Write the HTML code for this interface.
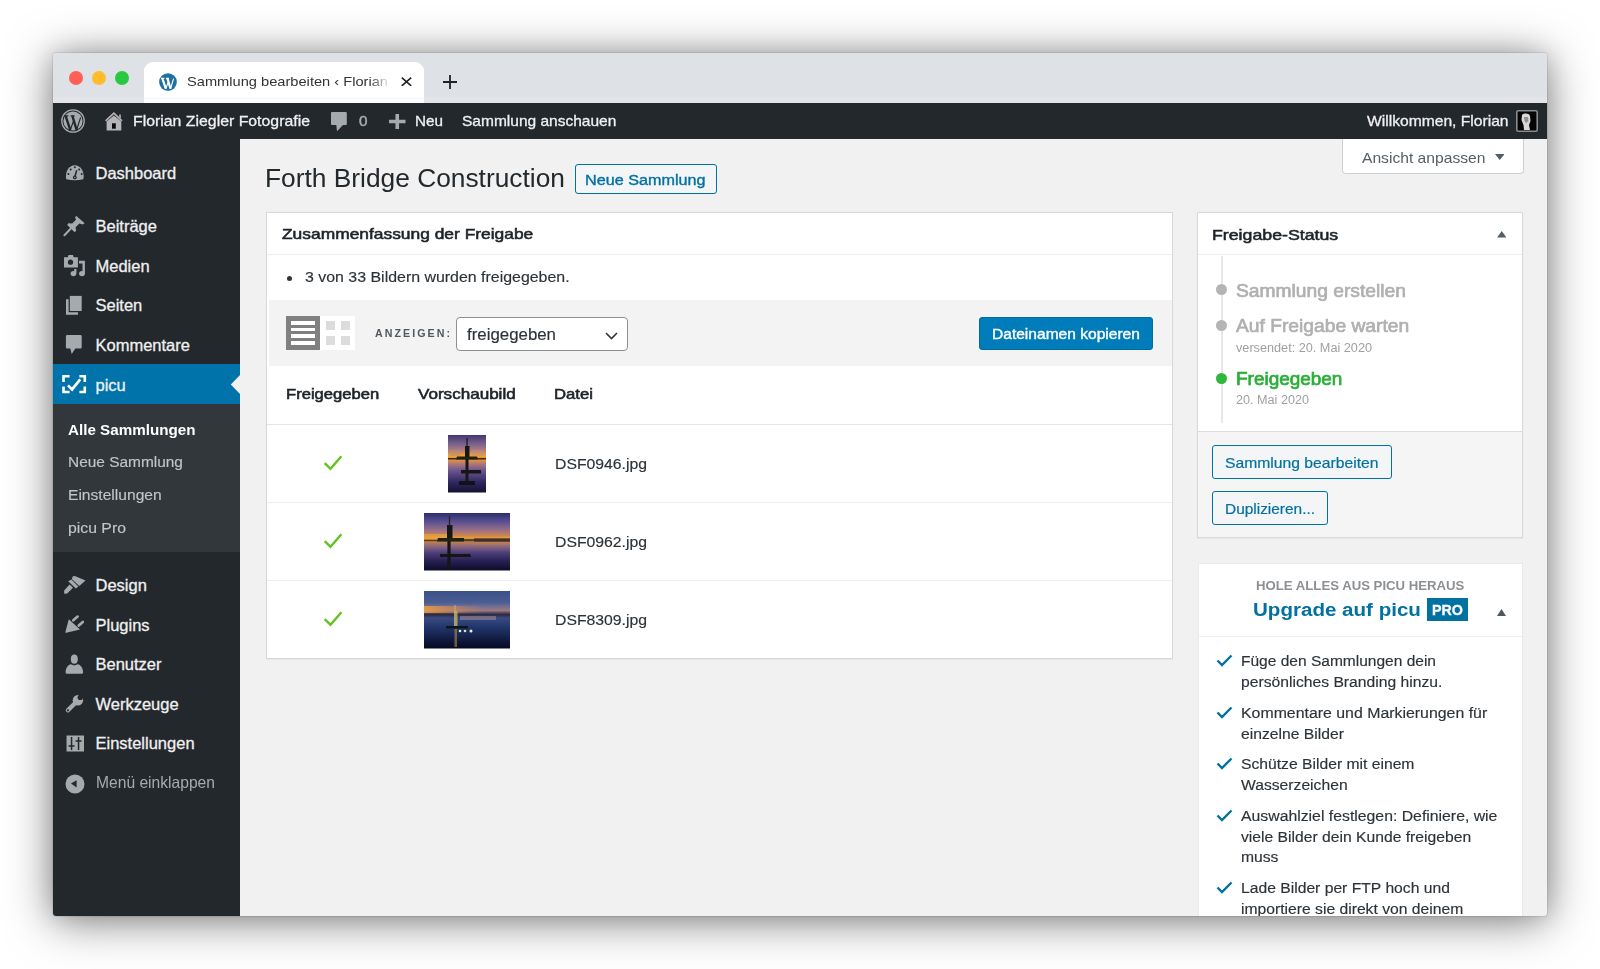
<!DOCTYPE html>
<html><head><meta charset="utf-8">
<style>
*{box-sizing:border-box;margin:0;padding:0}
html,body{width:1600px;height:969px;overflow:hidden;background:#fff;font-family:"Liberation Sans",sans-serif}
.a{position:absolute}
.t{position:absolute;white-space:nowrap}
#clip{position:absolute;left:0;top:0;width:1600px;height:916px;overflow:hidden}
</style></head><body>
<div class="a" style="left:53px;top:53px;width:1494px;height:863px;border-radius:3px;background:#f1f1f1;box-shadow:0 0 0 1px rgba(0,0,0,0.08),0 5px 46px rgba(0,0,0,0.5),0 0 22px rgba(0,0,0,0.12)"></div><div id="clip"><div class="a" style="left:53px;top:53px;width:1494px;height:50px;background:#dee1e6;border-radius:3px 3px 0 0"></div>
<div class="a" style="left:68.5px;top:70.5px;width:14px;height:14px;border-radius:50%;background:#fe5f57"></div>
<div class="a" style="left:91.5px;top:70.5px;width:14px;height:14px;border-radius:50%;background:#febc2e"></div>
<div class="a" style="left:114.5px;top:70.5px;width:14px;height:14px;border-radius:50%;background:#28c840"></div>
<div class="a" style="left:53px;top:96.5px;width:1494px;height:6px;background:#e2e4e8"></div>
<div class="a" style="left:144px;top:62px;width:280px;height:41px;background:#fff;border-radius:9px 9px 0 0"></div>
<div class="a" style="left:144px;top:97.5px;width:280px;height:1px;background:#f1f2f4"></div>
<svg class="a" style="left:159px;top:73px" width="18" height="18" viewBox="0 0 24 24"><circle cx="12" cy="12" r="11.8" fill="#1f6fa3"/><path d="M4.4 7.2L9.1 21M11.2 7.2L15.4 21" stroke="#fff" stroke-width="3"/><path d="M9.1 21L12.1 12.5M15.4 21L19.4 7.5M2.6 7.2H7.2M9.4 7.2H13.4" stroke="#fff" stroke-width="1.5"/></svg>
<div class="t" style="left:187.00px;top:74.57px;font-size:13.5px;line-height:13.5px;color:#333;transform:scaleX(1.0844);transform-origin:0 0;">Sammlung bearbeiten ‹ Florian</div>
<div class="a" style="left:370px;top:66px;width:24px;height:32px;background:linear-gradient(90deg,rgba(255,255,255,0),#fff 85%)"></div>
<svg class="a" style="left:400.5px;top:76.8px" width="11" height="9.5" viewBox="0 0 11 9.5"><path d="M0.8 0.6L10.2 8.9M10.2 0.6L0.8 8.9" stroke="#222" stroke-width="1.6"/></svg>
<svg class="a" style="left:443px;top:75px" width="14" height="14" viewBox="0 0 14 14"><path d="M7 0V14M0 7H14" stroke="#222" stroke-width="1.8"/></svg>
<div class="a" style="left:53px;top:102.5px;width:1494px;height:36px;background:#23282d"></div>
<svg class="a" style="left:61px;top:109px" width="24" height="24" viewBox="0 0 24 24"><circle cx="12" cy="12" r="11.2" fill="none" stroke="#a7aaad" stroke-width="1.3"/><circle cx="12" cy="12" r="9.6" fill="#a7aaad"/><path d="M4.6 6.8L9.3 21M11.4 6.8L15.6 21" stroke="#23282d" stroke-width="2.4"/><path d="M9.3 21L12.3 12.5M15.6 21L19.6 8.5M2.8 6.9H7.4M9.6 6.9H13.6" stroke="#23282d" stroke-width="1.1"/></svg>
<svg class="a" style="left:100px;top:106px" width="30" height="30" viewBox="0 0 30 30"><path d="M5.6 14.9L13.9 7.1L22 14.9" fill="none" stroke="#b4b6b9" stroke-width="1.6"/><path d="M19.2 8.5H20.8V12.5L19.2 11Z" fill="#b4b6b9"/><path d="M6.6 15.5L13.9 9.6L21.3 15.5V24.5H6.6Z" fill="#b4b6b9"/><rect x="12" y="17.3" width="3.8" height="5.4" fill="#0a0a0a"/></svg>
<div class="t" style="left:133.00px;top:113.97px;font-size:14.8px;line-height:14.8px;color:#f0f0f1;transform:scaleX(1.0705);transform-origin:0 0;-webkit-text-stroke:0.3px #f0f0f1;">Florian Ziegler Fotografie</div>
<svg class="a" style="left:330px;top:111px" width="18" height="21" viewBox="0 0 18 21"><path d="M2 1H15.8A1 1 0 0 1 16.8 2V13.1A1 1 0 0 1 15.8 14.1H13L7 20.2L6.3 14.1H2A1 1 0 0 1 1 13.1V2A1 1 0 0 1 2 1Z" fill="#a7aaad"/></svg>
<div class="t" style="left:358.50px;top:113.97px;font-size:14.8px;line-height:14.8px;color:#a7aaad;transform:scaleX(1.0326);transform-origin:0 0;-webkit-text-stroke:0.5px #a7aaad;">0</div>
<svg class="a" style="left:389px;top:114px" width="16.5" height="15" viewBox="0 0 16.5 15"><path d="M8.25 0V15M0 7.5H16.5" stroke="#a7aaad" stroke-width="3.6"/></svg>
<div class="t" style="left:415.20px;top:113.97px;font-size:14.8px;line-height:14.8px;color:#f0f0f1;transform:scaleX(1.0313);transform-origin:0 0;-webkit-text-stroke:0.3px #f0f0f1;">Neu</div>
<div class="t" style="left:462.00px;top:113.97px;font-size:14.8px;line-height:14.8px;color:#f0f0f1;transform:scaleX(1.0484);transform-origin:0 0;-webkit-text-stroke:0.3px #f0f0f1;">Sammlung anschauen</div>
<div class="t" style="left:1367.20px;top:113.97px;font-size:14.8px;line-height:14.8px;color:#f0f0f1;transform:scaleX(1.0563);transform-origin:0 0;-webkit-text-stroke:0.3px #f0f0f1;">Willkommen, Florian</div>
<svg class="a" style="left:1516px;top:110px" width="22" height="22" viewBox="0 0 22 22"><defs><filter id="avb"><feGaussianBlur stdDeviation="0.7"/></filter></defs><rect x="0.8" y="0.8" width="20.4" height="20.4" rx="1.5" fill="#050505" stroke="#8a8c90" stroke-width="1.6"/><g filter="url(#avb)"><path d="M6 5C8 3 13 3 14 6L14.5 11L13 15L14 20H8L7.5 15L5.5 10Z" fill="#d8d8d8"/><path d="M8 7H12L12.5 11L10 13L8.5 11Z" fill="#909090"/></g></svg>
<div class="a" style="left:53px;top:138px;width:186.8px;height:778px;background:#23282d;border-bottom-left-radius:3px"></div>
<div class="a" style="left:53px;top:404px;width:187px;height:148px;background:#32373c"></div>
<div class="a" style="left:53px;top:364px;width:187px;height:40px;background:#0073aa"></div>
<svg class="a" style="left:230px;top:375px" width="10" height="19" viewBox="0 0 10 19"><path d="M10 0V19L0.8 9.5Z" fill="#f1f1f1"/></svg>
<div class="t" style="left:95.50px;top:165.43px;font-size:16.5px;line-height:16.5px;color:#f0f0f1;-webkit-text-stroke:0.3px #f0f0f1;">Dashboard</div>
<div class="t" style="left:95.50px;top:217.93px;font-size:16.5px;line-height:16.5px;color:#f0f0f1;-webkit-text-stroke:0.3px #f0f0f1;">Beiträge</div>
<div class="t" style="left:95.50px;top:257.93px;font-size:16.5px;line-height:16.5px;color:#f0f0f1;-webkit-text-stroke:0.3px #f0f0f1;">Medien</div>
<div class="t" style="left:95.50px;top:297.28px;font-size:16.5px;line-height:16.5px;color:#f0f0f1;-webkit-text-stroke:0.3px #f0f0f1;">Seiten</div>
<div class="t" style="left:95.50px;top:336.63px;font-size:16.5px;line-height:16.5px;color:#f0f0f1;-webkit-text-stroke:0.3px #f0f0f1;">Kommentare</div>
<div class="t" style="left:95.50px;top:376.63px;font-size:16.5px;line-height:16.5px;color:#f0f0f1;-webkit-text-stroke:0.3px #f0f0f1;">picu</div>
<div class="t" style="left:95.50px;top:576.63px;font-size:16.5px;line-height:16.5px;color:#f0f0f1;-webkit-text-stroke:0.3px #f0f0f1;">Design</div>
<div class="t" style="left:95.50px;top:616.63px;font-size:16.5px;line-height:16.5px;color:#f0f0f1;-webkit-text-stroke:0.3px #f0f0f1;">Plugins</div>
<div class="t" style="left:95.50px;top:656.03px;font-size:16.5px;line-height:16.5px;color:#f0f0f1;-webkit-text-stroke:0.3px #f0f0f1;">Benutzer</div>
<div class="t" style="left:95.50px;top:695.63px;font-size:16.5px;line-height:16.5px;color:#f0f0f1;-webkit-text-stroke:0.3px #f0f0f1;">Werkzeuge</div>
<div class="t" style="left:95.50px;top:735.43px;font-size:16.5px;line-height:16.5px;color:#f0f0f1;-webkit-text-stroke:0.3px #f0f0f1;">Einstellungen</div>
<div class="t" style="left:95.50px;top:773.53px;font-size:16.5px;line-height:16.5px;color:#a7aaad;transform:scaleX(0.9469);transform-origin:0 0;">Menü einklappen</div>
<div class="t" style="left:67.50px;top:421.70px;font-size:15px;line-height:15px;color:#fff;font-weight:700;transform:scaleX(1.0130);transform-origin:0 0;">Alle Sammlungen</div>
<div class="t" style="left:67.50px;top:454.38px;font-size:15.2px;line-height:15.2px;color:#c3c4c7;transform:scaleX(1.0157);transform-origin:0 0;-webkit-text-stroke:0.15px #c3c4c7;">Neue Sammlung</div>
<div class="t" style="left:67.50px;top:487.13px;font-size:15.2px;line-height:15.2px;color:#c3c4c7;transform:scaleX(1.0272);transform-origin:0 0;-webkit-text-stroke:0.15px #c3c4c7;">Einstellungen</div>
<div class="t" style="left:67.50px;top:519.63px;font-size:15.2px;line-height:15.2px;color:#c3c4c7;transform:scaleX(1.0401);transform-origin:0 0;-webkit-text-stroke:0.15px #c3c4c7;">picu Pro</div>
<svg class="a" style="left:64.5px;top:164px" width="20" height="17" viewBox="0 0 20 17"><path d="M1.3 15.2C-0.2 8.5 3.5 1.2 9.8 1.2S19.8 8.5 18.3 15.2Q9.8 17.3 1.3 15.2Z" fill="#a7aaad"/><circle cx="3.4" cy="10.1" r="1" fill="#23282d"/><circle cx="5.7" cy="5.6" r="1" fill="#23282d"/><circle cx="9.8" cy="3.3" r="1" fill="#23282d"/><circle cx="14.2" cy="5.6" r="1" fill="#23282d"/><circle cx="16.7" cy="10.1" r="1" fill="#23282d"/><path d="M11.7 6.2L9.9 12.8" stroke="#23282d" stroke-width="1.5"/><circle cx="9.8" cy="13.4" r="1.9" fill="#23282d"/><circle cx="9.8" cy="13.4" r="0.7" fill="#a7aaad"/></svg>
<svg class="a" style="left:58px;top:210px" width="32" height="32" viewBox="0 0 32 32"><path d="M18.4 6L26.7 13.3L24.6 14.5L21.4 13.4L17.6 17.2L18.1 21.1L16.4 22.1L9.2 15L10.3 13.2L14.2 13.6L18 9.8L17.1 7.1Z" fill="#a7aaad"/><path d="M12.6 18.7L6.4 25.2" stroke="#a7aaad" stroke-width="2" stroke-linecap="round"/></svg>
<svg class="a" style="left:60px;top:252px" width="30" height="28" viewBox="0 0 30 28"><path d="M4 5.2H7.8L8.5 3H13L13.6 5.2H17.9V15.6H4Z" fill="#a7aaad"/><circle cx="10.5" cy="10.2" r="2.6" fill="#23282d"/><path d="M19 8.7H24.9V21.5H22.5V11.6H19Z" fill="#a7aaad"/><ellipse cx="22" cy="21.6" rx="2.9" ry="2.7" fill="#a7aaad"/><ellipse cx="13.4" cy="21.6" rx="2.8" ry="2.7" fill="#a7aaad"/><path d="M14.2 21.5V17H16.4V21.5Z" fill="#a7aaad"/></svg>
<svg class="a" style="left:60px;top:290px" width="30" height="30" viewBox="0 0 30 30"><path d="M9.8 5.9H21.7V21H9.8Z" fill="#a7aaad"/><path d="M6 9.3H8.6V22.2H18V24.8H6Z" fill="#a7aaad"/></svg>
<svg class="a" style="left:60px;top:330px" width="30" height="30" viewBox="0 0 30 30"><path d="M7.2 5H20.4A1.3 1.3 0 0 1 21.7 6.3V17.3A1.3 1.3 0 0 1 20.4 18.6H15.3L11.7 24L10.3 18.6H7.2A1.3 1.3 0 0 1 5.9 17.3V6.3A1.3 1.3 0 0 1 7.2 5Z" fill="#a7aaad"/></svg>
<svg class="a" style="left:58px;top:368px" width="34" height="34" viewBox="0 0 34 34"><path d="M5.5 14.1V8.3H11.6M21.4 8.3H26.8V14.1M26.8 18.4V24H21.4M11.6 24H5.5V18.4" fill="none" stroke="#fff" stroke-width="2.6"/><path d="M10 17.4L14.1 21.4L22.2 11.4" fill="none" stroke="#fff" stroke-width="2.7"/></svg>
<svg class="a" style="left:60px;top:570px" width="30" height="30" viewBox="0 0 30 30"><path d="M12.6 6.6Q14 5.6 16 6.4L25.5 10.4L19.3 15.9L12 9.3Z" fill="#a7aaad"/><path d="M8.2 11.3L11.4 9.4L18.4 16.4L15.8 18.6Z" fill="#a7aaad"/><path d="M9.6 14.6L13 17.8L7.2 23.6L4.2 23.7L4.1 20.6Z" fill="#a7aaad"/></svg>
<svg class="a" style="left:58px;top:606px" width="32" height="34" viewBox="0 0 32 34"><path d="M10.8 13.2L22 23.6L8.3 26.8Q7.2 27 7.4 25.9Z" fill="#a7aaad"/><path d="M15.3 14.3L19.6 10.6M20.8 19.6L24.8 16" stroke="#a7aaad" stroke-width="2.7" stroke-linecap="round"/></svg>
<svg class="a" style="left:58px;top:648px" width="32" height="32" viewBox="0 0 32 32"><ellipse cx="16.3" cy="11.2" rx="3.5" ry="4.6" fill="#a7aaad"/><path d="M7.6 24.6C7.6 19.5 10.5 16.6 12.8 16.2L16.3 17.6L19.8 16.2C22.2 16.6 25.1 19.5 25.1 24.6Q25.1 25.7 24 25.7H8.7Q7.6 25.7 7.6 24.6Z" fill="#a7aaad"/></svg>
<svg class="a" style="left:58px;top:688px" width="32" height="32" viewBox="0 0 32 32"><path d="M9.9 22.3L18 14.2" stroke="#a7aaad" stroke-width="4.4" stroke-linecap="round"/><circle cx="19.9" cy="12.2" r="5.2" fill="#a7aaad"/><circle cx="22.3" cy="9.4" r="2.7" fill="#23282d"/><path d="M22.3 9.4L24 5L27.5 8.5Z" fill="#23282d"/><circle cx="9.9" cy="22.3" r="1.1" fill="#23282d"/></svg>
<svg class="a" style="left:65.6px;top:735px" width="18.6" height="17" viewBox="0 0 18.5 17"><rect x="0.5" y="0.5" width="17.5" height="16" fill="#a7aaad"/><path d="M5.5 2V15M2.5 11H8.5M12.5 2V15M9.5 6H15.5" stroke="#23282d" stroke-width="1.5"/></svg>
<svg class="a" style="left:64.5px;top:774px" width="20" height="20" viewBox="0 0 20 20"><circle cx="10" cy="10" r="9.5" fill="#a7aaad"/><path d="M6 9.6L11.6 6.2V13.6Z" fill="#23282d"/></svg>
<div class="t" style="left:264.80px;top:166.33px;font-size:25.6px;line-height:25.6px;color:#23282d;transform:scaleX(1.0285);transform-origin:0 0;">Forth Bridge Construction</div>
<div class="a" style="left:575px;top:164px;width:141.5px;height:30px;border:1px solid #0071a1;border-radius:3px;background:#f3f5f6"></div>
<div class="t" style="left:584.50px;top:172.95px;font-size:14px;line-height:14px;color:#0071a1;transform:scaleX(1.1556);transform-origin:0 0;-webkit-text-stroke:0.35px #0071a1;">Neue Sammlung</div>
<div class="a" style="left:1341.5px;top:139px;width:182px;height:35px;background:#fff;border:1px solid #ccd0d4;border-top:none;border-radius:0 0 4px 4px"></div>
<div class="t" style="left:1362.00px;top:150.00px;font-size:15px;line-height:15px;color:#555d66;transform:scaleX(1.0421);transform-origin:0 0;">Ansicht anpassen</div>
<svg class="a" style="left:1494.5px;top:154px" width="9.5" height="6" viewBox="0 0 10 6.3"><path d="M0 0H10L5 6.3Z" fill="#555d66"/></svg>
<div class="a" style="left:266px;top:212px;width:907px;height:447px;background:#fff;border:1px solid #d6d8da;box-shadow:0 1px 1px rgba(0,0,0,.04)"></div>
<div class="t" style="left:281.60px;top:227.24px;font-size:14.6px;line-height:14.6px;color:#1d2327;transform:scaleX(1.1915);transform-origin:0 0;-webkit-text-stroke:0.55px #1d2327;">Zusammenfassung der Freigabe</div>
<div class="a" style="left:267px;top:253.5px;width:905px;height:1px;background:#eee"></div>
<div class="a" style="left:286.5px;top:275.5px;width:5px;height:5px;border-radius:50%;background:#333"></div>
<div class="t" style="left:305.00px;top:270.11px;font-size:14.75px;line-height:14.75px;color:#2c3338;transform:scaleX(1.0792);transform-origin:0 0;-webkit-text-stroke:0.15px #2c3338;">3 von 33 Bildern wurden freigegeben.</div>
<div class="a" style="left:269px;top:300px;width:903px;height:65.5px;background:#f3f3f3"></div>
<div class="a" style="left:285.5px;top:316px;width:34.5px;height:34px;background:#808080"></div>
<div class="a" style="left:291px;top:321px;width:24px;height:3.8px;background:#fff"></div>
<div class="a" style="left:291px;top:327.7px;width:24px;height:3.8px;background:#fff"></div>
<div class="a" style="left:291px;top:334.4px;width:24px;height:3.8px;background:#fff"></div>
<div class="a" style="left:291px;top:341.1px;width:24px;height:3.8px;background:#fff"></div>
<div class="a" style="left:320px;top:316px;width:35px;height:34px;background:#fff"></div>
<div class="a" style="left:326px;top:321px;width:9px;height:9px;background:#dcdcdc"></div>
<div class="a" style="left:341px;top:321px;width:9px;height:9px;background:#dcdcdc"></div>
<div class="a" style="left:326px;top:336px;width:9px;height:9px;background:#dcdcdc"></div>
<div class="a" style="left:341px;top:336px;width:9px;height:9px;background:#dcdcdc"></div>
<div class="t" style="left:375.00px;top:328.70px;font-size:10.4px;line-height:10.4px;color:#50575e;font-weight:700;letter-spacing:2.0px;transform:scaleX(1.0246);transform-origin:0 0;">ANZEIGEN:</div>
<div class="a" style="left:456px;top:317.25px;width:172px;height:34px;background:#fff;border:1px solid #8c8f94;border-radius:4px"></div>
<div class="t" style="left:467.00px;top:327.26px;font-size:16px;line-height:16px;color:#2c3338;transform:scaleX(1.0530);transform-origin:0 0;-webkit-text-stroke:0.15px #2c3338;">freigegeben</div>
<svg class="a" style="left:605px;top:332px" width="13" height="8" viewBox="0 0 13 8"><path d="M1 1L6.5 6.5L12 1" fill="none" stroke="#333" stroke-width="1.6"/></svg>
<div class="a" style="left:978.5px;top:316.5px;width:174.5px;height:33px;background:#007cba;border-radius:3px;border:1px solid #006ba1"></div>
<div class="t" style="left:992.25px;top:326.56px;font-size:14.4px;line-height:14.4px;color:#fff;transform:scaleX(1.0812);transform-origin:0 0;-webkit-text-stroke:0.35px #fff;">Dateinamen kopieren</div>
<div class="t" style="left:285.75px;top:388.48px;font-size:13.9px;line-height:13.9px;color:#1d2327;transform:scaleX(1.1947);transform-origin:0 0;-webkit-text-stroke:0.55px #1d2327;">Freigegeben</div>
<div class="t" style="left:418.00px;top:388.48px;font-size:13.9px;line-height:13.9px;color:#1d2327;transform:scaleX(1.2281);transform-origin:0 0;-webkit-text-stroke:0.55px #1d2327;">Vorschaubild</div>
<div class="t" style="left:553.50px;top:388.48px;font-size:13.9px;line-height:13.9px;color:#1d2327;transform:scaleX(1.2018);transform-origin:0 0;-webkit-text-stroke:0.55px #1d2327;">Datei</div>
<div class="a" style="left:267px;top:424px;width:905px;height:1px;background:#e5e5e5"></div>
<div class="a" style="left:267px;top:501.5px;width:905px;height:1px;background:#eee"></div>
<div class="a" style="left:267px;top:579.5px;width:905px;height:1px;background:#eee"></div>
<div class="t" style="left:554.50px;top:457.40px;font-size:14px;line-height:14px;color:#2c3338;transform:scaleX(1.1258);transform-origin:0 0;-webkit-text-stroke:0.15px #2c3338;">DSF0946.jpg</div>
<svg class="a" style="left:323px;top:454px" width="20" height="17" viewBox="0 0 20 17"><path d="M1.7 9.1L7.5 14.8L18.4 2.2" fill="none" stroke="#64c221" stroke-width="2.4"/></svg>
<div class="t" style="left:554.50px;top:535.40px;font-size:14px;line-height:14px;color:#2c3338;transform:scaleX(1.1258);transform-origin:0 0;-webkit-text-stroke:0.15px #2c3338;">DSF0962.jpg</div>
<svg class="a" style="left:323px;top:532px" width="20" height="17" viewBox="0 0 20 17"><path d="M1.7 9.1L7.5 14.8L18.4 2.2" fill="none" stroke="#64c221" stroke-width="2.4"/></svg>
<div class="t" style="left:554.50px;top:613.40px;font-size:14px;line-height:14px;color:#2c3338;transform:scaleX(1.1258);transform-origin:0 0;-webkit-text-stroke:0.15px #2c3338;">DSF8309.jpg</div>
<svg class="a" style="left:323px;top:610px" width="20" height="17" viewBox="0 0 20 17"><path d="M1.7 9.1L7.5 14.8L18.4 2.2" fill="none" stroke="#64c221" stroke-width="2.4"/></svg>
<svg class="a" style="left:448px;top:435px" width="38" height="57.5" viewBox="0 0 38 57.5"><defs><linearGradient id="g448435" x1="0" y1="0" x2="0" y2="1"><stop offset="0" stop-color="#44366e"/><stop offset="0.15" stop-color="#76608e"/><stop offset="0.28" stop-color="#b88078"/><stop offset="0.35" stop-color="#f0a030"/><stop offset="0.39" stop-color="#f0a030"/><stop offset="0.41" stop-color="#302020"/><stop offset="0.44" stop-color="#e09040"/><stop offset="0.5" stop-color="#b07878"/><stop offset="0.62" stop-color="#6a5490"/><stop offset="0.82" stop-color="#2e2860"/><stop offset="1" stop-color="#141030"/></linearGradient><filter id="fg448435" x="-10%" y="-10%" width="120%" height="120%"><feGaussianBlur stdDeviation="0.5"/></filter><clipPath id="cg448435"><rect width="38" height="57.5"/></clipPath></defs><rect width="38" height="57.5" fill="url(#g448435)"/><g clip-path="url(#cg448435)"><g filter="url(#fg448435)"><rect x="2" y="15" width="10" height="6" fill="#b09080" opacity="0.5"/><rect x="24" y="15" width="12" height="6" fill="#c09080" opacity="0.5"/><path d="M19 3V13" stroke="#1a1a1a" stroke-width="1.2"/><path d="M17 11H21.5V24H17Z" fill="#141414"/><path d="M9 21.5L29 21.5L30 24.5H8Z" fill="#1e2418"/><path d="M19 24V50" stroke="#161616" stroke-width="3"/><path d="M13 35H33V38.5H13Z" fill="#161616"/><path d="M11 46H27V50H11Z" fill="#12121a" opacity="0.9"/></g></g></svg>
<svg class="a" style="left:423.5px;top:513px" width="86.5" height="57.5" viewBox="0 0 86.5 57.5"><defs><linearGradient id="g423513" x1="0" y1="0" x2="0" y2="1"><stop offset="0" stop-color="#2c2c70"/><stop offset="0.15" stop-color="#5a5090"/><stop offset="0.3" stop-color="#9a7088"/><stop offset="0.4" stop-color="#d08848"/><stop offset="0.44" stop-color="#f0a038"/><stop offset="0.47" stop-color="#2a2020"/><stop offset="0.5" stop-color="#c08048"/><stop offset="0.58" stop-color="#8a6880"/><stop offset="0.7" stop-color="#4a3c78"/><stop offset="0.85" stop-color="#241e50"/><stop offset="1" stop-color="#0c0c28"/></linearGradient><filter id="fg423513" x="-10%" y="-10%" width="120%" height="120%"><feGaussianBlur stdDeviation="0.5"/></filter><clipPath id="cg423513"><rect width="86.5" height="57.5"/></clipPath></defs><rect width="86.5" height="57.5" fill="url(#g423513)"/><g clip-path="url(#cg423513)"><g filter="url(#fg423513)"><rect x="0" y="21" width="28" height="6" fill="#f0a838" opacity="0.6"/><rect x="50" y="25" width="37" height="4" fill="#2a2028" opacity="0.55"/><rect x="50" y="29" width="37" height="3" fill="#c08050" opacity="0.3"/><path d="M25.5 3V14" stroke="#202020" stroke-width="1.2"/><path d="M23 12H28.5V27H23Z" fill="#141414"/><path d="M14 25H40V28.5H13Z" fill="#1a2018"/><path d="M25 28V57" stroke="#141414" stroke-width="3.2"/><path d="M16 41H46L47 44H16Z" fill="#141414"/></g></g></svg>
<svg class="a" style="left:423.5px;top:591px" width="86.5" height="57.5" viewBox="0 0 86.5 57.5"><defs><linearGradient id="g423591" x1="0" y1="0" x2="0" y2="1"><stop offset="0" stop-color="#3a5088"/><stop offset="0.2" stop-color="#4a5e94"/><stop offset="0.28" stop-color="#7a7090"/><stop offset="0.34" stop-color="#9a7a80"/><stop offset="0.38" stop-color="#5a4858"/><stop offset="0.41" stop-color="#2a2a44"/><stop offset="0.47" stop-color="#3a4a80"/><stop offset="0.6" stop-color="#243a70"/><stop offset="0.8" stop-color="#14204a"/><stop offset="1" stop-color="#060a20"/></linearGradient><filter id="fg423591" x="-10%" y="-10%" width="120%" height="120%"><feGaussianBlur stdDeviation="0.6"/></filter><clipPath id="cg423591"><rect width="86.5" height="57.5"/></clipPath></defs><rect width="86.5" height="57.5" fill="url(#g423591)"/><g clip-path="url(#cg423591)"><g filter="url(#fg423591)"><defs><linearGradient id="og3" x1="0" x2="1"><stop offset="0" stop-color="#f0a040" stop-opacity="0.85"/><stop offset="0.5" stop-color="#e09048" stop-opacity="0.5"/><stop offset="1" stop-color="#c08060" stop-opacity="0"/></linearGradient></defs><rect x="0" y="15" width="60" height="7" fill="url(#og3)"/><rect x="36" y="25" width="36" height="4" fill="#b8a0a0" opacity="0.45"/><circle cx="36" cy="40" r="1.3" fill="#e0f0d0"/><circle cx="41" cy="40" r="1.3" fill="#e0e0c0"/><circle cx="47" cy="40" r="1.5" fill="#e8f0e0"/><path d="M31 14V22" stroke="#c0b080" stroke-width="1"/><path d="M30 20H33.5V36H30Z" fill="#c8b460" opacity="0.8"/><path d="M22 35H44V37.5H22Z" fill="#101418"/><path d="M30.5 38H33V56H30.5Z" fill="#d0a840" opacity="0.5"/></g></g></svg>
<div class="a" style="left:1197px;top:212px;width:326px;height:326px;background:#fff;border:1px solid #d6d8da;box-shadow:0 1px 1px rgba(0,0,0,.04)"></div>
<div class="t" style="left:1211.50px;top:226.70px;font-size:15px;line-height:15px;color:#1d2327;transform:scaleX(1.1829);transform-origin:0 0;-webkit-text-stroke:0.55px #1d2327;">Freigabe-Status</div>
<svg class="a" style="left:1496.5px;top:231px" width="9.5" height="6.5" viewBox="0 0 10 7"><path d="M0 7H10L5 0Z" fill="#555d66"/></svg>
<div class="a" style="left:1198px;top:254px;width:324px;height:1px;background:#eee"></div>
<div class="a" style="left:1220.5px;top:256px;width:2px;height:167px;background:#e8e8e8"></div>
<div class="a" style="left:1216.0px;top:283.9px;width:11px;height:11px;border-radius:50%;background:#b4b4b4"></div>
<div class="a" style="left:1216.0px;top:320.2px;width:11px;height:11px;border-radius:50%;background:#b4b4b4"></div>
<div class="a" style="left:1216.0px;top:372.9px;width:11px;height:11px;border-radius:50%;background:#2fb63b"></div>
<div class="t" style="left:1236.00px;top:282.73px;font-size:17.8px;line-height:17.8px;color:#b0b0b0;transform:scaleX(1.0807);transform-origin:0 0;-webkit-text-stroke:0.65px #b0b0b0;">Sammlung erstellen</div>
<div class="t" style="left:1236.00px;top:318.33px;font-size:17.8px;line-height:17.8px;color:#b0b0b0;transform:scaleX(1.0818);transform-origin:0 0;-webkit-text-stroke:0.65px #b0b0b0;">Auf Freigabe warten</div>
<div class="t" style="left:1236.00px;top:341.64px;font-size:12px;line-height:12px;color:#a0a0a0;transform:scaleX(1.0563);transform-origin:0 0;">versendet: 20. Mai 2020</div>
<div class="t" style="left:1236.00px;top:370.53px;font-size:17.8px;line-height:17.8px;color:#2aaf38;transform:scaleX(1.0655);transform-origin:0 0;-webkit-text-stroke:0.7px #2aaf38;">Freigegeben</div>
<div class="t" style="left:1236.00px;top:393.84px;font-size:12px;line-height:12px;color:#a0a0a0;transform:scaleX(1.0521);transform-origin:0 0;">20. Mai 2020</div>
<div class="a" style="left:1198px;top:431px;width:324px;height:106px;background:#f5f5f5;border-top:1px solid #ddd"></div>
<div class="a" style="left:1212px;top:444.5px;width:179.5px;height:34px;border:1px solid #0071a1;border-radius:3px;background:#f3f5f6"></div>
<div class="t" style="left:1225.00px;top:454.55px;font-size:15px;line-height:15px;color:#0071a1;transform:scaleX(1.0459);transform-origin:0 0;-webkit-text-stroke:0.2px #0071a1;">Sammlung bearbeiten</div>
<div class="a" style="left:1212px;top:491px;width:116px;height:34px;border:1px solid #0071a1;border-radius:3px;background:#f3f5f6"></div>
<div class="t" style="left:1225.40px;top:500.80px;font-size:15px;line-height:15px;color:#0071a1;transform:scaleX(1.0281);transform-origin:0 0;-webkit-text-stroke:0.2px #0071a1;">Duplizieren...</div>
<div class="a" style="left:1198px;top:563px;width:325px;height:400px;background:#fff;border:1px solid #e9e9e9"></div>
<div class="t" style="left:1255.80px;top:580.21px;font-size:12.75px;line-height:12.75px;color:#8c8f94;font-weight:700;transform:scaleX(1.0334);transform-origin:0 0;">HOLE ALLES AUS PICU HERAUS</div>
<div class="t" style="left:1252.75px;top:600.35px;font-size:19.2px;line-height:19.2px;color:#0071a1;font-weight:700;transform:scaleX(1.0713);transform-origin:0 0;">Upgrade auf picu</div>
<div class="a" style="left:1427px;top:598px;width:40.8px;height:23px;background:#0071a1"></div>
<div class="t" style="left:1432.00px;top:602.73px;font-size:14.5px;line-height:14.5px;color:#fff;font-weight:700;transform:scaleX(0.9866);transform-origin:0 0;-webkit-text-stroke:0.3px #fff;">PRO</div>
<svg class="a" style="left:1497px;top:608.5px" width="9" height="7" viewBox="0 0 9 7"><path d="M0 7H9L4.5 0Z" fill="#50575e"/></svg>
<div class="a" style="left:1199px;top:636px;width:323px;height:1px;background:#eee"></div>
<svg class="a" style="left:1216px;top:654.2px" width="17" height="13" viewBox="0 0 17 13"><path d="M1.5 6.5L6 11L15.5 1.5" fill="none" stroke="#0071a1" stroke-width="2.4"/></svg>
<div class="t" style="left:1241.00px;top:654.35px;font-size:14px;line-height:14px;color:#2c3338;transform:scaleX(1.1086);transform-origin:0 0;-webkit-text-stroke:0.15px #2c3338;">Füge den Sammlungen dein</div>
<div class="t" style="left:1241.00px;top:675.05px;font-size:14px;line-height:14px;color:#2c3338;transform:scaleX(1.1200);transform-origin:0 0;-webkit-text-stroke:0.15px #2c3338;">persönliches Branding hinzu.</div>
<svg class="a" style="left:1216px;top:705.8px" width="17" height="13" viewBox="0 0 17 13"><path d="M1.5 6.5L6 11L15.5 1.5" fill="none" stroke="#0071a1" stroke-width="2.4"/></svg>
<div class="t" style="left:1241.00px;top:705.95px;font-size:14px;line-height:14px;color:#2c3338;transform:scaleX(1.1340);transform-origin:0 0;-webkit-text-stroke:0.15px #2c3338;">Kommentare und Markierungen für</div>
<div class="t" style="left:1241.00px;top:726.65px;font-size:14px;line-height:14px;color:#2c3338;transform:scaleX(1.1200);transform-origin:0 0;-webkit-text-stroke:0.15px #2c3338;">einzelne Bilder</div>
<svg class="a" style="left:1216px;top:757.3px" width="17" height="13" viewBox="0 0 17 13"><path d="M1.5 6.5L6 11L15.5 1.5" fill="none" stroke="#0071a1" stroke-width="2.4"/></svg>
<div class="t" style="left:1241.00px;top:757.45px;font-size:14px;line-height:14px;color:#2c3338;transform:scaleX(1.1200);transform-origin:0 0;-webkit-text-stroke:0.15px #2c3338;">Schütze Bilder mit einem</div>
<div class="t" style="left:1241.00px;top:778.35px;font-size:14px;line-height:14px;color:#2c3338;transform:scaleX(1.1200);transform-origin:0 0;-webkit-text-stroke:0.15px #2c3338;">Wasserzeichen</div>
<svg class="a" style="left:1216px;top:808.6px" width="17" height="13" viewBox="0 0 17 13"><path d="M1.5 6.5L6 11L15.5 1.5" fill="none" stroke="#0071a1" stroke-width="2.4"/></svg>
<div class="t" style="left:1241.00px;top:808.75px;font-size:14px;line-height:14px;color:#2c3338;transform:scaleX(1.1284);transform-origin:0 0;-webkit-text-stroke:0.15px #2c3338;">Auswahlziel festlegen: Definiere, wie</div>
<div class="t" style="left:1241.00px;top:829.85px;font-size:14px;line-height:14px;color:#2c3338;transform:scaleX(1.1200);transform-origin:0 0;-webkit-text-stroke:0.15px #2c3338;">viele Bilder dein Kunde freigeben</div>
<div class="t" style="left:1241.00px;top:850.35px;font-size:14px;line-height:14px;color:#2c3338;transform:scaleX(1.1200);transform-origin:0 0;-webkit-text-stroke:0.15px #2c3338;">muss</div>
<svg class="a" style="left:1216px;top:880.8px" width="17" height="13" viewBox="0 0 17 13"><path d="M1.5 6.5L6 11L15.5 1.5" fill="none" stroke="#0071a1" stroke-width="2.4"/></svg>
<div class="t" style="left:1241.00px;top:880.95px;font-size:14px;line-height:14px;color:#2c3338;transform:scaleX(1.1200);transform-origin:0 0;-webkit-text-stroke:0.15px #2c3338;">Lade Bilder per FTP hoch und</div>
<div class="t" style="left:1241.00px;top:901.85px;font-size:14px;line-height:14px;color:#2c3338;transform:scaleX(1.1200);transform-origin:0 0;-webkit-text-stroke:0.15px #2c3338;">importiere sie direkt von deinem</div></div>
</body></html>
